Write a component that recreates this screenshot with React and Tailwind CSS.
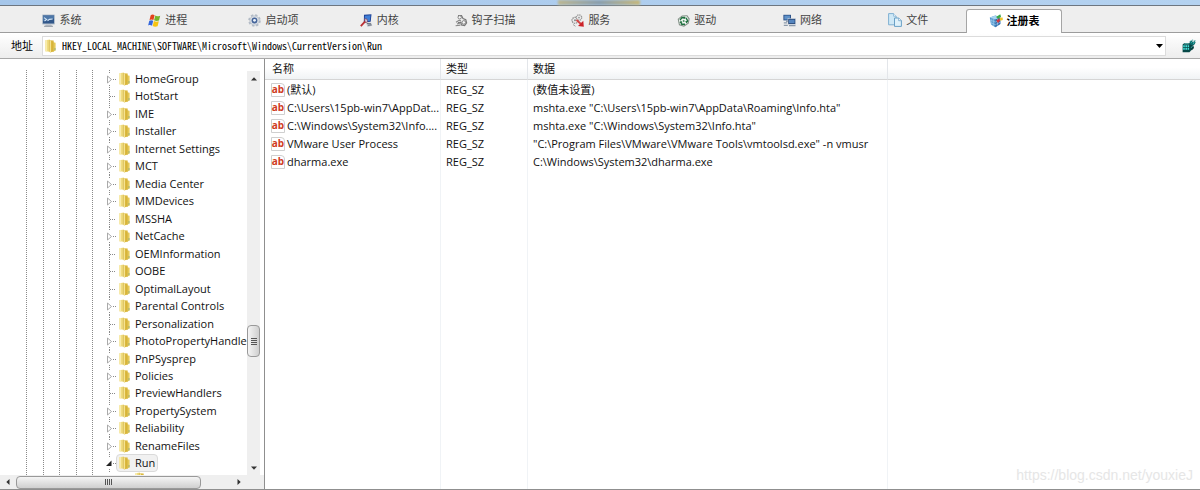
import React from 'react';

const SystemIcon = () => (
  <svg viewBox="0 0 13 13" className="size-[13px] shrink-0" aria-hidden="true">
    <rect x="0" y="0.5" width="13" height="10" rx="0.8" fill="#b4c0cc" />
    <rect x="1" y="1.5" width="11" height="8" fill="#31578a" />
    <path d="M1 1.5h11v3L1 7z" fill="#4d77a8" />
    <path d="M2 3.600l2.600 1.800L2.500 7M5.500 6.800l2-1.400 3.200-.4" stroke="#d3e6f7" strokeWidth="1.100" fill="none" />
    <path d="M4 10.500h5l1.500 2h-8z" fill="#b9bec5" />
    <path d="M2 12.300h9" stroke="#828b96" strokeWidth="0.800" />
  </svg>
);

const WindowsIcon = () => (
  <svg viewBox="0 0 13 13" className="size-[13px] shrink-0" aria-hidden="true">
    <path d="M2.700 1.200C4 .4 5.300.4 6.600 1.300L5.400 6.100C4.200 5.300 2.900 5.300 1.500 6z" fill="#e3431c" />
    <path d="M7.300 1.600c1.300.9 2.900.9 4.900.1L11 6.500c-1.500.7-3.300.7-4.900-.2z" fill="#76b52a" />
    <path d="M1.300 6.700c1.400-.7 2.600-.7 3.900.1L4 11.700C2.800 10.900 1.500 10.900.1 11.500z" fill="#3467dc" />
    <path d="M5.900 7c1.500.9 3.300 1 4.900.3l-1.200 4.900c-1.600.7-3.400.7-4.900-.2z" fill="#f7c40f" />
  </svg>
);

const GearIcon = () => (
  <svg viewBox="0 0 13 13" className="size-[13px] shrink-0" aria-hidden="true">
    <circle cx="6.500" cy="6.500" r="5.300" fill="none" stroke="#b4bcc7" strokeWidth="2" strokeDasharray="2.300 1.860" />
    <circle cx="6.500" cy="6.500" r="4.700" fill="#d9dee5" stroke="#aab3c0" strokeWidth="0.600" />
    <circle cx="6.500" cy="6.500" r="2.900" fill="#46659a" />
    <circle cx="6.500" cy="6.300" r="1.400" fill="#eef4fb" />
  </svg>
);

const KernelIcon = () => (
  <svg viewBox="0 0 13 13" className="size-[13px] shrink-0" aria-hidden="true">
    <path d="M4 .8l7.500-.5-.8 7.500-6.900.8z" fill="#1b3f94" />
    <path d="M4.900 1.700l5.600-.4-.6 5.600-5.300.6z" fill="#3f7ed6" />
    <path d="M6 8.500l5 .2 1.300 3-4.800 1z" fill="#b6bcc7" />
    <path d="M7 9.500l4 .3M8 11.300l3.500-.4" stroke="#59616e" strokeWidth="0.800" />
    <path d="M.8 12.200l4.600-5" stroke="#bb2f33" strokeWidth="1.800" />
    <path d="M4.600 4.800l2.400.4.400 2.600-2 .8z" fill="#e4edf9" stroke="#8b3846" strokeWidth="0.700" />
  </svg>
);

const HookIcon = () => (
  <svg viewBox="0 0 13 13" className="size-[13px] shrink-0" aria-hidden="true" fill="none">
    <path d="M3 1.500h3.500l1.500 3 2.800 1.300.8 3-2 2.800-3.200-.7-.5-2.500-3 .2" stroke="#777" strokeWidth="1.200" />
    <circle cx="4.700" cy="3.300" r="1.700" fill="#f5f5f5" stroke="#777" strokeWidth="0.900" />
    <circle cx="8.800" cy="8.400" r="1.800" fill="#f5f5f5" stroke="#777" strokeWidth="0.900" />
    <path d="M1 8.300l3-2 2 .6M.6 11.700l4.800-.6M2 10l3-1" stroke="#888" strokeWidth="1.100" />
  </svg>
);

const ServiceIcon = () => (
  <svg viewBox="0 0 13 13" className="size-[13px] shrink-0" aria-hidden="true">
    <circle cx="4" cy="6.300" r="3" fill="#ececec" stroke="#8f8f8f" strokeWidth="1.300" strokeDasharray="1.500 0.700" />
    <circle cx="8" cy="3.600" r="2.700" fill="#ececec" stroke="#999" strokeWidth="1.300" strokeDasharray="1.400 0.700" />
    <circle cx="4" cy="6.300" r="1" fill="#888" />
    <circle cx="8" cy="3.600" r=".9" fill="#999" />
    <path d="M5.500 6l4.500 4" stroke="#d54545" strokeWidth="2" />
    <path d="M7 12l5.300-5.200.5 6z" fill="#cc2229" />
    <path d="M2 10.500l2.500 1.800" stroke="#a0a0a0" />
  </svg>
);

const DriverIcon = () => (
  <svg viewBox="0 0 13 13" className="size-[13px] shrink-0" aria-hidden="true">
    <path d="M.7 5L5 1.500l5.300-.3 2.400 3.600-1 4.700L7 12.700l-5-1.400z" fill="#7f8d83" />
    <path d="M1.800 5.200l3.500-2.600 4.500-.4 1.700 2.700-.8 4L6.700 11.500l-3.900-1.200z" fill="#f1f6f2" />
    <path d="M3 6.200l2-2.700 2.200.2M9 3.800l1.500 2.700-.7 1.500M8 10.300H4.800L3.700 8" stroke="#1f7040" strokeWidth="1.400" fill="none" />
    <path d="M6.800 2.300l2 1.500-2 1.500zM11.300 7.300L9.300 9.500 8.300 7zM2.500 8.900l1.400-2.300 1.500 2z" fill="#1d6f3b" />
    <circle cx="6.700" cy="7" r="1" fill="#4e8f66" />
  </svg>
);

const NetworkIcon = () => (
  <svg viewBox="0 0 13 13" className="size-[13px] shrink-0" aria-hidden="true">
    <rect x=".4" y=".8" width="7.600" height="5.600" fill="#294f87" />
    <rect x="1.300" y="1.600" width="5.800" height="3.900" fill="#5f91c8" />
    <path d="M3 6.400h2.500v1.500H3z" fill="#8693a5" />
    <rect x="5" y="4.600" width="7.600" height="5.600" fill="#213f6f" stroke="#dce3ec" strokeWidth="0.500" />
    <rect x="6" y="5.600" width="5.600" height="3.600" fill="#5485bf" />
    <path d="M6 11.700h6.500M.8 8.800h3.400M.8 11.300h4" stroke="#8c9aab" strokeWidth="1.300" fill="none" />
  </svg>
);

const FilesIcon = () => (
  <svg viewBox="0 0 14 14" className="size-[14px] shrink-0" aria-hidden="true">
    <path d="M.6.600h5l2.500 2.600v8.600H.6z" fill="#cfe8f6" stroke="#7fb0d2" />
    <path d="M5.600.600v2.600h2.500" fill="#fff" stroke="#7fb0d2" strokeWidth="0.800" />
    <path d="M6.500 5h4.300l2.600 2.600v5.800H6.500z" fill="#dff1fa" stroke="#6aa0c6" />
    <path d="M10.700 5v2.700h2.700" fill="#fff" stroke="#6aa0c6" strokeWidth="0.800" />
  </svg>
);

const RegistryIcon = () => (
  <svg viewBox="0 0 14 14" className="size-[14px] shrink-0" aria-hidden="true">
    <path d="M.8 3.500l5.700-2 4.800 2v6.500l-5 3.300L2 10.500z" fill="#4d93cd" />
    <path d="M.8 3.500l5.700-2 4.800 2-5 2z" fill="#a8d4f2" />
    <path d="M6.300 5.500l5-2v6.500l-5 3.300z" fill="#3a6fac" />
    <path d="M2.800 4.400v6.600M4.600 5v7M1 6l5.300 2 5-2M1.400 8.500l4.900 2.200 5-2.600M8.500 5v6.600" stroke="#a8d0ec" strokeWidth="0.600" fill="none" />
    <path d="M7 3L11.300.200l.7 2.600-2.800 2z" fill="#39a846" />
    <path d="M10.600 3.800l3.100-.4.100 2.600-2.500.8z" fill="#f0c52c" />
    <path d="M7.300 6.500l2.800-2 .9 2.200-2 2.300z" fill="#d9343a" />
  </svg>
);

const CubesIcon = () => (
  <svg viewBox="0 0 14 14" className="size-[14px] shrink-0" aria-hidden="true">
    <path d="M.6 5.600L2.500 4h4.800l3 2-.3 4.300-2.500 3H.6z" fill="#064847" />
    <path d="M1.200 6.200h1.600v2H1.200zM3.400 6.200h1.700v2H3.400zM5.700 6.200h1.400v2H5.700zM1.200 9h1.600v1.800H1.200zM3.400 9h1.700v1.800H3.400zM5.700 9h1.400v1.800H5.700z" fill="#45dcd6" />
    <path d="M1.800 5.300l1-.8h3.800l.8.8z" fill="#a2f3ef" />
    <path d="M7.600 2.500l1.700-1.300L10.900 3l1.700-.9 1 1.500-1.300 2.200-2.300.6-2.200-1.400z" fill="#0c6b6a" />
    <path d="M8.800 6.500l2.500-.2.700 2.600-2.300 2.600z" fill="#0a3d3d" />
    <path d="M8.700 2.600l1 1M11 4.300l1.300-.6M9.300 8.600l1-1.300" stroke="#5ee0dc" strokeWidth="0.900" />
    <path d="M9.800.6l1.700.5-.7 1zM12 1.200l1.700.3-.6 1z" fill="#1a8f8b" />
  </svg>
);

const FolderIcon = () => (
  <svg viewBox="0 0 11 14" className="h-[14px] w-[11px] shrink-0" aria-hidden="true">
    <path d="M0.300 1.200L5 .4v12.300l-4.700-.5z" fill="#f0dc80" />
    <path d="M.3 1.200L2 .9v11.500l-1.700-.2z" fill="#f8ecae" />
    <path d="M4.300 1.200l4.400.3v11L4.900 13.500z" fill="#dcb93e" />
    <path d="M4.300 1.200l1.600.2v12l-1.600-.7z" fill="#f8e89c" />
    <path d="M8 3.200l2.600.6v7.700L8 12.700z" fill="#e6ca58" />
    <path d="M8.100 3.200v9.400M4.300 1.200v11.500" stroke="#c29f30" strokeWidth="0.500" />
    <path d="M10 9v2.300" stroke="#90ad7c" strokeWidth="0.900" />
  </svg>
);

const StringIcon = () => (
  <span className="flex h-[14px] w-[14px] shrink-0 items-center justify-center rounded-tr border border-[#cfcfcf] bg-white pb-px text-[10px] leading-none font-bold text-[#cf3b22]" aria-hidden="true">
    ab
  </span>
);

const Arrow = ({ d }) => (
  <svg viewBox="0 0 8 8" className="size-2" aria-hidden="true">
    <path d={d} fill="#333" />
  </svg>
);
const UP = 'M1 5.500L4 2.300l3 3.200z';
const DOWN = 'M1 2.500L4 5.700l3-3.200z';
const LEFT = 'M5.500 1L2.300 4l3.200 3z';
const RIGHT = 'M2.500 1l3.200 3-3.200 3z';

const TABS = [
  ['系统', SystemIcon],
  ['进程', WindowsIcon],
  ['启动项', GearIcon],
  ['内核', KernelIcon],
  ['钩子扫描', HookIcon],
  ['服务', ServiceIcon],
  ['驱动', DriverIcon],
  ['网络', NetworkIcon],
  ['文件', FilesIcon],
  ['注册表', RegistryIcon],
];

const NODES = [
  ['HomeGroup', 'closed'],
  ['HotStart', 'leaf'],
  ['IME', 'closed'],
  ['Installer', 'closed'],
  ['Internet Settings', 'closed'],
  ['MCT', 'closed'],
  ['Media Center', 'closed'],
  ['MMDevices', 'closed'],
  ['MSSHA', 'leaf'],
  ['NetCache', 'closed'],
  ['OEMInformation', 'leaf'],
  ['OOBE', 'leaf'],
  ['OptimalLayout', 'leaf'],
  ['Parental Controls', 'closed'],
  ['Personalization', 'leaf'],
  ['PhotoPropertyHandle', 'closed'],
  ['PnPSysprep', 'closed'],
  ['Policies', 'closed'],
  ['PreviewHandlers', 'leaf'],
  ['PropertySystem', 'closed'],
  ['Reliability', 'closed'],
  ['RenameFiles', 'closed'],
  ['Run', 'open'],
];

const VALUES = [
  ['(默认)', 'REG_SZ', '(数值未设置)'],
  ['C:\\Users\\15pb-win7\\AppDat...', 'REG_SZ', 'mshta.exe "C:\\Users\\15pb-win7\\AppData\\Roaming\\Info.hta"'],
  ['C:\\Windows\\System32\\Info....', 'REG_SZ', 'mshta.exe "C:\\Windows\\System32\\Info.hta"'],
  ['VMware User Process', 'REG_SZ', '"C:\\Program Files\\VMware\\VMware Tools\\vmtoolsd.exe" -n vmusr'],
  ['dharma.exe', 'REG_SZ', 'C:\\Windows\\System32\\dharma.exe'],
];

const Branch = ({ kind }) => (
  <svg viewBox="0 0 11 18" className="h-[18px] w-[11px] shrink-0" aria-hidden="true">
    {kind === 'leaf' ? (
      <path d="M4.500 0v18M5 9.500h6" stroke="#888" strokeDasharray="1 1" fill="none" />
    ) : (
      <path d="M4.500 0v4M4.500 15v3M8 9.500h3" stroke="#888" strokeDasharray="1 1" fill="none" />
    )}
    {kind === 'closed' && <path d="M2.500 6v7L6.500 9.500z" fill="#fff" stroke="#a0a0a0" strokeWidth="0.900" />}
    {kind === 'open' && <path d="M6.500 6.500v5.500H1z" fill="#222" />}
  </svg>
);

const Guide = ({ width }) => (
  <span className={'border-l border-dotted border-[#8a8a8a] ' + width} />
);

const TabBar = () => (
  <div role="tablist" className="flex h-[27px] border-b border-[#9c9c9c] bg-[#eeeeee] pr-[133px] pl-[9px]">
    {TABS.map(([label, Icon], i) => {
      const active = i === TABS.length - 1;
      return (
        <div key={label} className="flex flex-1">
          <button
            role="tab"
            aria-selected={active}
            className={
              active
                ? 'mx-[5px] mt-[3px] -mb-px flex flex-1 items-center justify-center gap-1 rounded-t-[3px] border border-b-0 border-[#a5a5a5] bg-white pb-0.5 font-bold whitespace-nowrap text-black'
                : 'flex flex-1 items-center justify-center gap-1 pt-0.5 whitespace-nowrap text-[#444]'
            }
          >
            <Icon />
            {label}
          </button>
        </div>
      );
    })}
  </div>
);

const AddressBar = () => (
  <div className="flex h-[26px] items-center border-b border-[#a8a8a8] bg-linear-to-b from-white to-[#ededed] pr-1 pl-[11px]">
    <label htmlFor="address" className="w-[31px] shrink-0 text-black">
      地址
    </label>
    <div className="flex h-5 min-w-0 flex-1 items-center border border-[#dcdcdc] bg-white pl-0.5">
      <FolderIcon />
      <input
        id="address"
        type="text"
        defaultValue="HKEY_LOCAL_MACHINE\SOFTWARE\Microsoft\Windows\CurrentVersion\Run"
        className="ml-1.5 min-w-0 flex-1 bg-transparent font-['Noto_Sans_Mono_CJK_SC','Liberation_Mono',monospace] text-[10px] leading-4 font-medium text-black outline-none"
      />
      <button aria-label="展开地址列表" className="flex w-3 justify-center">
        <svg viewBox="0 0 7 4" className="h-1 w-[7px]" aria-hidden="true">
          <path d="M0 0h7L3.500 4z" fill="#000" />
        </svg>
      </button>
    </div>
    <button aria-label="注册表" className="ml-4">
      <CubesIcon />
    </button>
  </div>
);

const VerticalScrollbar = () => (
  <div className="mt-3 mr-1 flex w-[13px] shrink-0 flex-col items-center bg-[#efefef]">
    <button aria-label="向上滚动" className="flex h-[15px] items-center justify-center">
      <Arrow d={UP} />
    </button>
    <span className="grow-7 basis-0" />
    <span className="flex h-8 w-[13px] flex-col items-center justify-center gap-px rounded-sm border border-[#999] bg-linear-to-r from-[#f5f5f5] to-[#cfcfcf]">
      <span className="h-px w-1.5 bg-[#555]" />
      <span className="h-px w-1.5 bg-[#555]" />
      <span className="h-px w-1.5 bg-[#555]" />
      <span className="h-px w-1.5 bg-[#555]" />
    </span>
    <span className="grow-3 basis-0" />
    <button aria-label="向下滚动" className="flex h-[15px] items-center justify-center">
      <Arrow d={DOWN} />
    </button>
  </div>
);

const HorizontalScrollbar = () => (
  <div className="flex h-[14px] shrink-0 items-center bg-[#efefef] pr-[17px]">
    <button aria-label="向左滚动" className="flex w-4 items-center justify-center">
      <Arrow d={LEFT} />
    </button>
    <span className="flex h-[13px] w-[185px] items-center justify-center gap-px rounded-sm border border-[#999] bg-linear-to-b from-[#f5f5f5] to-[#cfcfcf]">
      <span className="h-1.5 w-px bg-[#555]" />
      <span className="h-1.5 w-px bg-[#555]" />
      <span className="h-1.5 w-px bg-[#555]" />
      <span className="h-1.5 w-px bg-[#555]" />
    </span>
    <span className="flex-1" />
    <button aria-label="向右滚动" className="flex w-4 items-center justify-center">
      <Arrow d={RIGHT} />
    </button>
  </div>
);

const KeyTree = () => (
  <nav className="flex w-[265px] shrink-0 flex-col border-r border-[#8f8f8f]">
    <div className="flex min-h-0 flex-1">
      <div className="flex min-w-0 flex-1 overflow-hidden pt-[11px] pl-[26px]">
        <div className="flex shrink-0" aria-hidden="true">
          <Guide width="w-[17px]" />
          <Guide width="w-4" />
          <Guide width="w-[17px]" />
          <Guide width="w-4" />
          <Guide width="w-[13px]" />
        </div>
        <ul role="tree" className="flex min-w-0 flex-1 flex-col">
          {NODES.map(([name, kind]) => (
            <li
              key={name}
              role="treeitem"
              aria-selected={kind === 'open'}
              className="flex min-h-0 flex-1 items-center"
            >
              <Branch kind={kind} />
              <button
                className={
                  'flex h-[18px] items-center gap-[5px] rounded-sm border px-0.5 whitespace-nowrap ' +
                  (kind === 'open' ? 'border-[#dadada] bg-[#f1f1f1]' : 'border-transparent')
                }
              >
                <FolderIcon />
                {name}
              </button>
            </li>
          ))}
          <li role="none" className="h-[3px] shrink-0 overflow-hidden pl-[30px]">
            <FolderIcon />
          </li>
        </ul>
      </div>
      <VerticalScrollbar />
    </div>
    <HorizontalScrollbar />
  </nav>
);

const HEAD = 'h-[21px] border-r border-b border-r-[#e3e6ea] border-b-[#d5d5d5] text-left font-normal';
const CELL = 'h-[18px] border-r border-[#f0f3f6] pt-px whitespace-nowrap';

const ValueTable = () => (
  <table className="h-full w-full table-fixed border-separate border-spacing-0">
    <colgroup>
      <col className="w-[176px]" />
      <col className="w-[87px]" />
      <col className="w-[360px]" />
      <col />
    </colgroup>
    <thead>
      <tr className="bg-linear-to-b from-white from-40% to-[#eff2f4]">
        <th className={HEAD + ' pl-[7px]'}>名称</th>
        <th className={HEAD + ' pl-[5px]'}>类型</th>
        <th className={HEAD + ' pl-[5px]'}>数据</th>
        <th className="border-b border-[#d5d5d5]" />
      </tr>
    </thead>
    <tbody>
      {VALUES.map(([name, type, data]) => (
        <tr key={name}>
          <td className={CELL + ' pl-1.5'}>
            <span className="flex items-center gap-0.5">
              <StringIcon />
              {name}
            </span>
          </td>
          <td className={CELL + ' pl-[5px]'}>{type}</td>
          <td className={CELL + ' pl-[5px]'}>{data}</td>
          <td />
        </tr>
      ))}
      <tr className="h-full">
        <td className="border-r border-[#f0f3f6]" />
        <td className="border-r border-[#f0f3f6]" />
        <td className="border-r border-[#f0f3f6]" />
        <td />
      </tr>
    </tbody>
  </table>
);

export default function App() {
  return (
    <div className="relative flex h-screen min-h-[490px] flex-col border-b border-[#8f8f8f] bg-white font-['Open_Sans','Noto_Sans_CJK_SC',sans-serif] text-[11px] leading-4 text-[#111]">
      <div className="flex h-1.5 shrink-0 border-b border-[#6d7680] bg-linear-to-r from-[#a5c6ea] via-[#aecdee] to-[#b4d2f0]">
        <span className="ml-[46.5%] h-full w-[82px] bg-linear-to-r from-[#bcb792] via-[#8b9fae] to-[#c6b87c] blur-[1px]" />
      </div>
      <TabBar />
      <AddressBar />
      <main className="flex min-h-0 flex-1">
        <KeyTree />
        <section className="min-w-0 flex-1">
          <ValueTable />
        </section>
      </main>
      <p className="absolute right-[7px] bottom-[6px] font-['Liberation_Sans',sans-serif] text-[14px] text-[#e6e6e6]">
        https://blog.csdn.net/youxieJ
      </p>
    </div>
  );
}
